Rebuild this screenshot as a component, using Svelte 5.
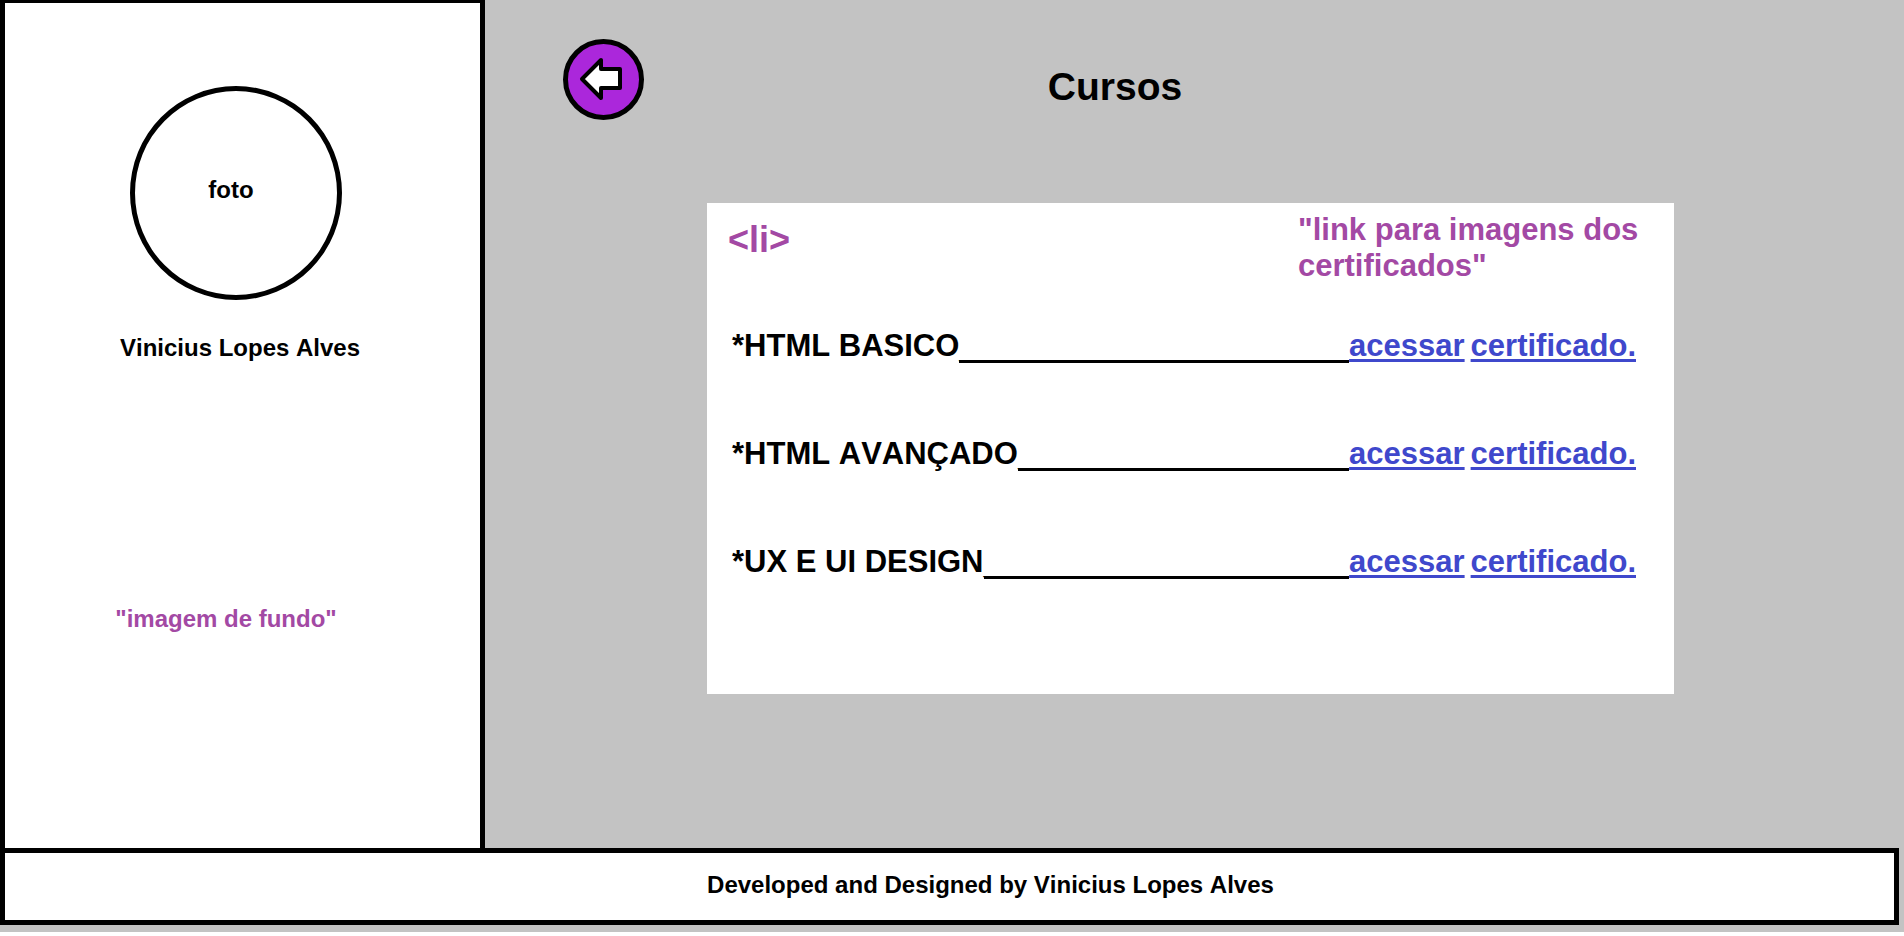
<script>
  const courses = [
    { name: '*HTML BASICO', leader: 22 },
    { name: '*HTML AVANÇADO', leader: 19 },
    { name: '*UX E UI DESIGN', leader: 21 }
  ];
</script>

<div class="page">
  <div class="body">
    <aside class="sidebar">
      <div class="photo">foto</div>
      <p class="name">Vinicius Lopes Alves</p>
      <p class="background-note">"imagem de fundo"</p>
    </aside>

    <main>
      <header>
        <button class="back" type="button" aria-label="Voltar">
          <svg viewBox="0 0 81 81" width="81" height="81" aria-hidden="true">
            <circle cx="40.5" cy="40.5" r="38" fill="#ab27db" stroke="#000" stroke-width="5" />
            <path
              d="M19 40 L38 21 V30 H57 V49 H38 V59 Z"
              fill="#fff"
              stroke="#000"
              stroke-width="4"
              stroke-linejoin="round"
            />
          </svg>
        </button>
        <h1>Cursos</h1>
      </header>

      <section class="card">
        <div class="notes">
          <p class="tag">&lt;li&gt;</p>
          <p class="link-note">"link para imagens dos certificados"</p>
        </div>
        <ul>
          {#each courses as course}
            <li>
              <span>{course.name}</span>
              <span class="leader">{'_'.repeat(course.leader)}</span>
              <a href="#certificado"><span>acessar</span><span>certificado.</span></a>
            </li>
          {/each}
        </ul>
      </section>
    </main>
  </div>

  <footer>Developed and Designed by Vinicius Lopes Alves</footer>
</div>

<style>
  :global(body) {
    margin: 0;
    background: #fff;
  }

  .page {
    box-sizing: border-box;
    display: flex;
    flex-direction: column;
    min-height: calc(100vh - 4px);
    padding: 0 5px 7px 0;
    background: #c3c3c3;
    color: #000;
    font-family: 'Liberation Sans', Arial, sans-serif;
    font-size: 24px;
    font-weight: 700;
    line-height: 28px;
    font-kerning: none;
  }

  p,
  h1,
  ul {
    margin: 0;
    padding: 0;
  }

  .body {
    flex: 1;
    display: flex;
  }

  .sidebar {
    box-sizing: border-box;
    flex: 0 0 485px;
    display: flex;
    flex-direction: column;
    align-items: center;
    padding: 83px 5px 0 0;
    border: 5px solid #000;
    border-top-width: 3px;
    border-bottom: 0;
    background: #fff;
  }

  .photo {
    box-sizing: border-box;
    display: flex;
    align-items: center;
    justify-content: center;
    width: 212px;
    height: 214px;
    margin-right: 8px;
    padding: 0 10px 6px 0;
    border: 5px solid #000;
    border-radius: 50%;
  }

  .name {
    margin-top: 34px;
  }

  .background-note {
    margin: 243px 28px 0 0;
    color: #a349a4;
  }

  main {
    flex: 1;
    min-width: 0;
    padding-top: 39px;
  }

  header {
    display: flex;
    padding: 0 313px 0 78px;
  }

  .back {
    flex: none;
    width: 81px;
    height: 81px;
    padding: 0;
    border: 0;
    border-radius: 50%;
    background: none;
    cursor: pointer;
  }

  .back svg {
    display: block;
  }

  h1 {
    flex: 1;
    margin-top: 24px;
    font-size: 39px;
    line-height: 48px;
    text-align: center;
  }

  .card {
    margin: 83px 225px 0 222px;
    padding: 9px 0 114px;
    background: #fff;
    font-size: 31px;
    line-height: 36px;
  }

  .notes {
    display: flex;
    justify-content: space-between;
    padding: 0 26px 0 21px;
    color: #a349a4;
  }

  .tag {
    margin-top: 7px;
    font-size: 36px;
    line-height: 42px;
  }

  .link-note {
    width: 350px;
  }

  ul {
    display: grid;
    gap: 72px;
    margin-top: 44px;
    padding: 0 38px 0 25px;
    list-style: none;
  }

  li {
    display: flex;
    align-items: flex-start;
    white-space: nowrap;
  }

  /* The rule carries the underscores on up to the link. */
  .leader {
    box-sizing: border-box;
    flex: 1;
    height: 35px;
    border-bottom: 3px solid #000;
    line-height: 38px;
  }

  a {
    display: flex;
    gap: 6px;
    color: #3f48cc;
    text-decoration: none;
  }

  a span {
    text-decoration: underline;
    text-decoration-thickness: 3px;
    text-underline-offset: 3px;
    text-decoration-skip-ink: none;
  }

  footer {
    padding: 18px 0 21px 82px;
    border: 5px solid #000;
    background: #fff;
    text-align: center;
  }
</style>
